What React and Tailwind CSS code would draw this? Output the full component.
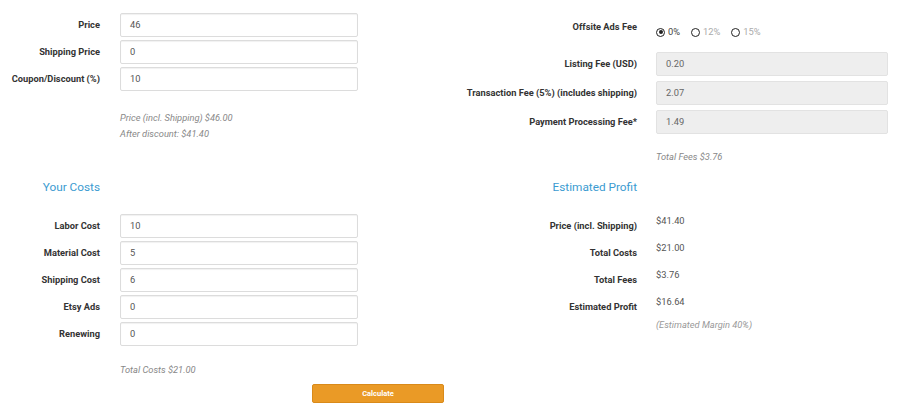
import React from "react";

function Field({ label, value }) {
  return (
    <div className="flex items-center h-[24px] mb-[3px]">
      <div className="w-[100px] text-right text-[9.3px] leading-[14px] font-bold text-[#333]">{label}</div>
      <div className="ml-[20px] w-[238px] h-[24px] border border-[#dcdcdc] rounded-[2px] bg-white shadow-[inset_0_1px_1px_rgba(0,0,0,0.06)] flex items-center pl-[9px] text-[9.3px] text-[#555]">
        {value}
      </div>
    </div>
  );
}

function FeeField({ label, value }) {
  return (
    <div className="flex items-center h-[24px] mb-[5px]">
      <div className="w-[175px] text-right text-[9.3px] leading-[14px] font-bold text-[#333]">{label}</div>
      <div className="ml-[19px] w-[232px] h-[24px] border border-[#e2e2e2] rounded-[2px] bg-[#eeeeee] flex items-center pl-[9px] text-[9.3px] text-[#666]">
        {value}
      </div>
    </div>
  );
}

function Radio({ checked, label }) {
  return (
    <div className="flex items-center mr-[11px]">
      <span className="w-[9px] h-[9px] rounded-full border-[1.5px] border-[#222] flex items-center justify-center">
        {checked && <span className="w-[4px] h-[4px] rounded-full bg-[#222]" />}
      </span>
      <span className={"ml-[3px] text-[9.3px] leading-[14px] " + (checked ? "text-[#444]" : "text-[#aaa]")}>{label}</span>
    </div>
  );
}

function ProfitRow({ label, value }) {
  return (
    <div className="flex h-[27px]">
      <div className="w-[175px] pt-[5px] text-right text-[9.3px] leading-[14px] font-bold text-[#333]">{label}</div>
      <div className="ml-[19px] text-[9.3px] leading-[14px] text-[#555]">{value}</div>
    </div>
  );
}

export default function App() {
  return (
    <div className="w-[924px] h-[418px] bg-white font-['Roboto',sans-serif] overflow-hidden">
      {/* Top row */}
      <div className="flex h-[175px] pt-[13px]">
        <div className="w-[462px]">
          <Field label="Price" value="46" />
          <Field label="Shipping Price" value="0" />
          <Field label="Coupon/Discount (%)" value="10" />
          <div className="ml-[120px] mt-[19px] text-[9.3px] leading-[16px] italic text-[#888]">
            <div>Price (incl. Shipping) $46.00</div>
            <div>After discount: $41.40</div>
          </div>
        </div>
        <div className="w-[462px]">
          <div className="flex h-[39px]">
            <div className="w-[175px] pt-[7px] text-right text-[9.3px] leading-[14px] font-bold text-[#333]">Offsite Ads Fee</div>
            <div className="ml-[19px] pt-[12px] flex items-start">
              <Radio checked label="0%" />
              <Radio label="12%" />
              <Radio label="15%" />
            </div>
          </div>
          <FeeField label="Listing Fee (USD)" value="0.20" />
          <FeeField label="Transaction Fee (5%) (includes shipping)" value="2.07" />
          <FeeField label="Payment Processing Fee*" value="1.49" />
          <div className="ml-[194px] mt-[16px] text-[9.3px] leading-[14px] italic text-[#888]">Total Fees $3.76</div>
        </div>
      </div>

      {/* Bottom row */}
      <div className="flex">
        <div className="w-[462px]">
          <div className="w-[100px] text-right text-[11.8px] leading-[24px] text-[#3b9bd1]">Your Costs</div>
          <div className="mt-[15px]">
            <Field label="Labor Cost" value="10" />
            <Field label="Material Cost" value="5" />
            <Field label="Shipping Cost" value="6" />
            <Field label="Etsy Ads" value="0" />
            <Field label="Renewing" value="0" />
          </div>
          <div className="ml-[120px] mt-[17px] text-[9.3px] leading-[14px] italic text-[#888]">Total Costs $21.00</div>
        </div>
        <div className="w-[462px]">
          <div className="w-[175px] text-right text-[11.8px] leading-[24px] text-[#3b9bd1]">Estimated Profit</div>
          <div className="mt-[15px]">
            <ProfitRow label="Price (incl. Shipping)" value="$41.40" />
            <ProfitRow label="Total Costs" value="$21.00" />
            <ProfitRow label="Total Fees" value="$3.76" />
            <ProfitRow label="Estimated Profit" value="$16.64" />
            <div className="ml-[194px] mt-[-4px] text-[9.3px] leading-[14px] italic text-[#999]">(Estimated Margin 40%)</div>
          </div>
        </div>
      </div>
      <div className="ml-[312px] mt-[7px] w-[132px] h-[19px] rounded-[2px] bg-[#ea9a26] border border-[#d98a1a] flex items-center justify-center text-[7.5px] font-bold text-white">
        Calculate
      </div>
    </div>
  );
}
